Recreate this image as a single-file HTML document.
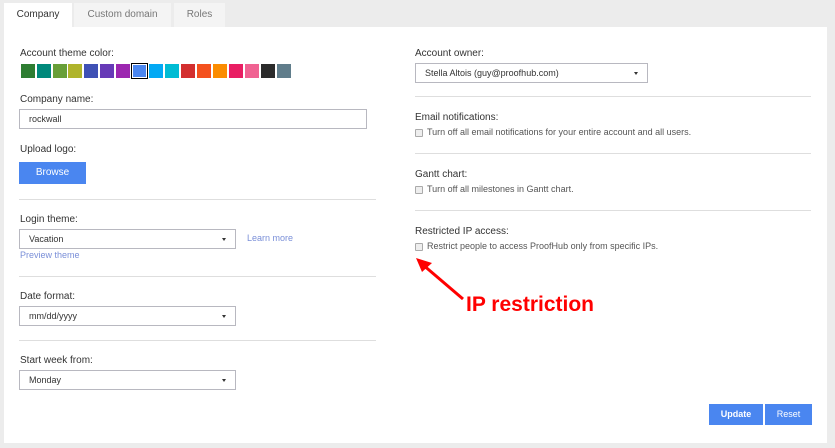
<!DOCTYPE html><html><head><style>
*{box-sizing:border-box;margin:0;padding:0}
body{width:835px;height:448px;background:#ececec;font-family:"Liberation Sans",sans-serif;position:relative;overflow:hidden;color:#333}
.a{position:absolute}
.lbl{font-size:10px;color:#333}
.panel{left:4px;top:27px;width:823px;height:416px;background:#fff}
.tab{top:3px;height:24px;background:#f4f4f4;font-size:10px;color:#777;text-align:center;line-height:24px}
.sw{top:64px;width:14px;height:14px}
.inp{border:1px solid #b8b8c0;background:#fff;font-size:9px;color:#333;padding-left:9px;line-height:18px;height:20px}
.inp b{position:absolute;right:9px;top:8px;border-left:2px solid transparent;border-right:2px solid transparent;border-top:3px solid #333}
.hr{height:1px;background:#dedede}
.cb{width:8px;height:8px;border:1px solid #aaa;background:#eee;border-radius:1px}
.t9{font-size:9px;color:#555}
.btn{background:#4a86f0;color:#fff;font-size:9px;font-weight:bold;text-align:center;line-height:21px}
.link{color:#7a8fd8;font-size:9px}
</style></head><body>
<div class="a panel"></div>
<div class="a tab" style="left:4px;width:68px;background:#fff;color:#333">Company</div>
<div class="a tab" style="left:74px;width:97px">Custom domain</div>
<div class="a tab" style="left:174px;width:51px">Roles</div>

<div class="a lbl" style="left:20px;top:48px">Account theme color:</div>
<div class="a sw" style="left:21px;background:#2e7d32"></div>
<div class="a sw" style="left:37px;background:#00897b"></div>
<div class="a sw" style="left:53px;background:#689f38"></div>
<div class="a sw" style="left:68px;background:#afb42b"></div>
<div class="a sw" style="left:84px;background:#3f51b5"></div>
<div class="a sw" style="left:100px;background:#673ab7"></div>
<div class="a sw" style="left:116px;background:#9c27b0"></div>
<div class="a sw" style="left:131px;top:63px;width:17px;height:16px;border:1px solid #000;background:#fff"></div>
<div class="a sw" style="left:133px;top:65px;width:13px;height:12px;background:#4a86f0"></div>
<div class="a sw" style="left:149px;background:#03a9f4"></div>
<div class="a sw" style="left:165px;background:#00bcd4"></div>
<div class="a sw" style="left:181px;background:#d32f2f"></div>
<div class="a sw" style="left:197px;background:#f4511e"></div>
<div class="a sw" style="left:213px;background:#fb8c00"></div>
<div class="a sw" style="left:229px;background:#e91e63"></div>
<div class="a sw" style="left:245px;background:#f06292"></div>
<div class="a sw" style="left:261px;background:#2b2b2b"></div>
<div class="a sw" style="left:277px;background:#607d8b"></div>

<div class="a lbl" style="left:20px;top:94px">Company name:</div>
<div class="a inp" style="left:19px;top:109px;width:348px">rockwall</div>
<div class="a lbl" style="left:20px;top:144px">Upload logo:</div>
<div class="a btn" style="left:19px;top:162px;width:67px;height:22px;line-height:22px;font-weight:normal;font-size:10px">Browse</div>
<div class="a hr" style="left:19px;top:199px;width:357px"></div>

<div class="a lbl" style="left:20px;top:214px">Login theme:</div>
<div class="a inp" style="left:19px;top:229px;width:217px">Vacation<b></b></div>
<div class="a link" style="left:247px;top:233px">Learn more</div>
<div class="a link" style="left:20px;top:250px">Preview theme</div>
<div class="a hr" style="left:19px;top:276px;width:357px"></div>

<div class="a lbl" style="left:20px;top:291px">Date format:</div>
<div class="a inp" style="left:19px;top:306px;width:217px">mm/dd/yyyy<b></b></div>
<div class="a hr" style="left:19px;top:340px;width:357px"></div>

<div class="a lbl" style="left:20px;top:355px">Start week from:</div>
<div class="a inp" style="left:19px;top:370px;width:217px">Monday<b></b></div>

<div class="a lbl" style="left:415px;top:48px">Account owner:</div>
<div class="a inp" style="left:415px;top:63px;width:233px">Stella Altois (guy@proofhub.com)<b></b></div>
<div class="a hr" style="left:415px;top:96px;width:396px"></div>
<div class="a lbl" style="left:415px;top:112px">Email notifications:</div>
<div class="a cb" style="left:415px;top:129px"></div>
<div class="a t9" style="left:427px;top:127px">Turn off all email notifications for your entire account and all users.</div>
<div class="a hr" style="left:415px;top:153px;width:396px"></div>
<div class="a lbl" style="left:415px;top:169px">Gantt chart:</div>
<div class="a cb" style="left:415px;top:186px"></div>
<div class="a t9" style="left:427px;top:184px">Turn off all milestones in Gantt chart.</div>
<div class="a hr" style="left:415px;top:210px;width:396px"></div>
<div class="a lbl" style="left:415px;top:226px">Restricted IP access:</div>
<div class="a cb" style="left:415px;top:243px"></div>
<div class="a t9" style="left:427px;top:241px">Restrict people to access ProofHub only from specific IPs.</div>

<svg class="a" style="left:410px;top:255px" width="60" height="50"><line x1="53" y1="44" x2="12" y2="9" stroke="#f00" stroke-width="3"/><polygon points="6,3 22,8 12,17" fill="#f00"/></svg>
<div class="a" style="left:466px;top:293px;color:#f00;font-weight:bold;font-size:21px">IP restriction</div>

<div class="a btn" style="left:709px;top:404px;width:54px;height:21px">Update</div>
<div class="a btn" style="left:765px;top:404px;width:47px;height:21px;font-weight:normal">Reset</div>
</body></html>
